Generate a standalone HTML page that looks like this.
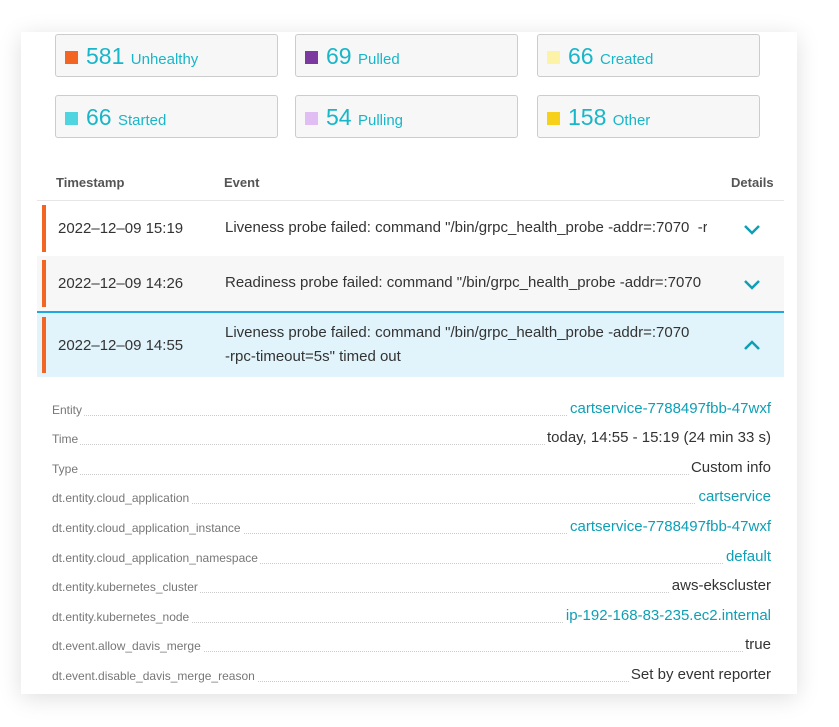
<!DOCTYPE html>
<html><head><style>
body{margin:0;width:839px;height:727px;background:#fff;font-family:"Liberation Sans",sans-serif;position:relative;overflow:hidden}
.card{position:absolute;left:21px;top:32px;width:776px;height:662px;background:#fff;box-shadow:0 4px 22px rgba(0,0,0,.13)}
.tile{position:absolute;width:223px;height:43px;background:#f7f7f7;border:1px solid #ccc;border-radius:3px;box-sizing:border-box}
.tile i{position:absolute;left:9px;top:16px;width:13px;height:13px}
.tile b{position:absolute;left:30px;top:8px;font-weight:normal;font-size:23px;color:#18b6c9}
.tile b span{font-size:15px}
.hdr{position:absolute;top:175px;font-size:13px;font-weight:bold;color:#555}
.row{position:absolute;left:37px;width:747px}
.bar{position:absolute;left:5px;top:4px;bottom:4px;width:4px;background:#f26522}
.ts{position:absolute;left:21px;font-size:15px;color:#333}
.ev{position:absolute;left:188px;font-size:15px;color:#333;white-space:nowrap;overflow:hidden;width:482px;line-height:24px}
.chev{position:absolute;left:705px;width:20px;height:14px}
.dl{position:absolute;left:52px;width:719px;height:14px;border-bottom:1px dotted #ccc}
.dl .k{position:absolute;left:0;top:2px;font-size:12px;color:#777;background:#fff;padding-right:2px}
.dl .v{position:absolute;right:0;top:-1px;font-size:15px;color:#333;background:#fff;padding-left:2px}
.dl .v.l{color:#0e9fb5}
</style></head><body>
<div class="card"></div>
<div class="tile" style="left:55px;top:34px"><i style="background:#f26522"></i><b>581 <span>Unhealthy</span></b></div>
<div class="tile" style="left:295px;top:34px"><i style="background:#7c3aa0"></i><b>69 <span>Pulled</span></b></div>
<div class="tile" style="left:537px;top:34px"><i style="background:#fdf3a7"></i><b>66 <span>Created</span></b></div>
<div class="tile" style="left:55px;top:95px"><i style="background:#4fd5e0"></i><b>66 <span>Started</span></b></div>
<div class="tile" style="left:295px;top:95px"><i style="background:#e0bdf2"></i><b>54 <span>Pulling</span></b></div>
<div class="tile" style="left:537px;top:95px"><i style="background:#f7d019"></i><b>158 <span>Other</span></b></div>
<div class="hdr" style="left:56px">Timestamp</div>
<div class="hdr" style="left:224px">Event</div>
<div class="hdr" style="left:731px">Details</div>
<div style="position:absolute;left:37px;top:200px;width:747px;height:1px;background:#e6e6e6"></div>
<div class="row" style="top:201px;height:55px;background:#fff"><div class="bar"></div><div class="ts" style="top:19px">2022–12–09 15:19</div><div class="ev" style="top:15px">Liveness probe failed: command "/bin/grpc_health_probe -addr=:7070 &nbsp;-rpc</div><svg class="chev" style="top:21px" viewBox="0 0 20 14"><path d="M3 4l7 7 7-7" fill="none" stroke="#0e9fb5" stroke-width="2.5"/></svg></div>
<div class="row" style="top:256px;height:55px;background:#f7f7f7"><div class="bar"></div><div class="ts" style="top:19px">2022–12–09 14:26</div><div class="ev" style="top:15px">Readiness probe failed: command "/bin/grpc_health_probe -addr=:7070 &nbsp;-rpc</div><svg class="chev" style="top:21px" viewBox="0 0 20 14"><path d="M3 4l7 7 7-7" fill="none" stroke="#0e9fb5" stroke-width="2.5"/></svg></div>
<div class="row" style="top:311px;height:66px;background:#e1f4fb;border-top:2px solid #1ea7e0;box-sizing:border-box"><div class="bar"></div><div class="ts" style="top:24px">2022–12–09 14:55</div><div class="ev" style="top:8px">Liveness probe failed: command "/bin/grpc_health_probe -addr=:7070<br>-rpc-timeout=5s" timed out</div><svg class="chev" style="top:25px" viewBox="0 0 20 14"><path d="M3 11l7-7 7 7" fill="none" stroke="#0e9fb5" stroke-width="2.5"/></svg></div>
<div class="dl" style="top:401px"><span class="k">Entity</span><span class="v l">cartservice-7788497fbb-47wxf</span></div>
<div class="dl" style="top:430px"><span class="k">Time</span><span class="v">today, 14:55 - 15:19 (24 min 33 s)</span></div>
<div class="dl" style="top:460px"><span class="k">Type</span><span class="v">Custom info</span></div>
<div class="dl" style="top:489px"><span class="k">dt.entity.cloud_application</span><span class="v l">cartservice</span></div>
<div class="dl" style="top:519px"><span class="k">dt.entity.cloud_application_instance</span><span class="v l">cartservice-7788497fbb-47wxf</span></div>
<div class="dl" style="top:549px"><span class="k">dt.entity.cloud_application_namespace</span><span class="v l">default</span></div>
<div class="dl" style="top:578px"><span class="k">dt.entity.kubernetes_cluster</span><span class="v">aws-ekscluster</span></div>
<div class="dl" style="top:608px"><span class="k">dt.entity.kubernetes_node</span><span class="v l">ip-192-168-83-235.ec2.internal</span></div>
<div class="dl" style="top:637px"><span class="k">dt.event.allow_davis_merge</span><span class="v">true</span></div>
<div class="dl" style="top:667px"><span class="k">dt.event.disable_davis_merge_reason</span><span class="v">Set by event reporter</span></div>
</body></html>
